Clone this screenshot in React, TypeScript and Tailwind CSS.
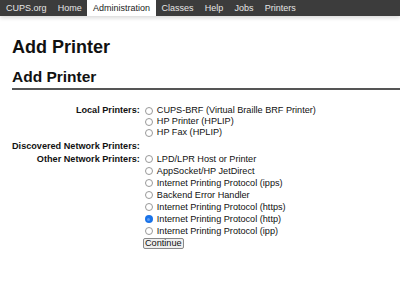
import React from "react";

const navItems = ["CUPS.org", "Home", "Administration", "Classes", "Help", "Jobs", "Printers"];

const localPrinters = [
  "CUPS-BRF (Virtual Braille BRF Printer)",
  "HP Printer (HPLIP)",
  "HP Fax (HPLIP)",
];

const otherPrinters = [
  "LPD/LPR Host or Printer",
  "AppSocket/HP JetDirect",
  "Internet Printing Protocol (ipps)",
  "Backend Error Handler",
  "Internet Printing Protocol (https)",
  "Internet Printing Protocol (http)",
  "Internet Printing Protocol (ipp)",
];

function Radio({ checked }: { checked?: boolean }) {
  return checked ? (
    <span className="inline-flex items-center justify-center w-[8px] h-[8px] rounded-full bg-[#1a73e8] mr-[4px] shrink-0">
      <span className="w-[3px] h-[3px] rounded-full bg-[#5b9cf5]" />
    </span>
  ) : (
    <span className="inline-block w-[8px] h-[8px] rounded-full border border-[#999] bg-white mr-[4px] shrink-0" />
  );
}

function Option({ label, checked, tall }: { label: string; checked?: boolean; tall?: boolean }) {
  return (
    <div className={tall ? "flex items-center h-[12px]" : "flex items-center h-[11px]"}>
      <Radio checked={checked} />
      <span>{label}</span>
    </div>
  );
}

export default function App() {
  return (
    <div className="w-[400px] h-[307px] bg-white font-['Liberation_Sans',Arial,sans-serif] text-[#111] overflow-hidden">
      <div className="flex h-[16px] bg-[#3c3c3c] text-[9px] leading-[16px] text-[#e6e6e6] pl-[0.35px] shadow-[0_2px_4px_rgba(0,0,0,0.15)]">
        {navItems.map((item) => (
          <div
            key={item}
            className={
              item === "Administration"
                ? "px-[5.65px] bg-white text-[#222]"
                : "px-[5.65px]"
            }
          >
            {item}
          </div>
        ))}
      </div>

      <div className="pl-[12px]">
        <h1 className="text-[18px] font-bold leading-[22px] mt-[20px]">Add Printer</h1>
        <h2 className="text-[15.5px] font-bold leading-[18px] mt-[10px] pb-[2px] border-b-2 border-[#555]">
          Add Printer
        </h2>

        <div className="grid grid-cols-[auto_1fr] gap-x-[5px] gap-y-[1.5px] text-[9.15px] leading-[11px] mt-[15px]">
          <div className="font-bold text-right">Local Printers:</div>
          <div>
            {localPrinters.map((p) => (
              <Option key={p} label={p} />
            ))}
          </div>

          <div className="font-bold text-right leading-[12px]">Discovered Network Printers:</div>
          <div className="h-[12px]" />

          <div className="font-bold text-right leading-[12px]">Other Network Printers:</div>
          <div>
            {otherPrinters.map((p) => (
              <Option key={p} label={p} tall checked={p === "Internet Printing Protocol (http)"} />
            ))}
            <button className="block -ml-[2px] mt-[1px] w-[41px] h-[11px] text-[9.2px] leading-[9px] border border-[#888] rounded-[2px] bg-[#efefef] text-[#111]">
              Continue
            </button>
          </div>
        </div>
      </div>
    </div>
  );
}
